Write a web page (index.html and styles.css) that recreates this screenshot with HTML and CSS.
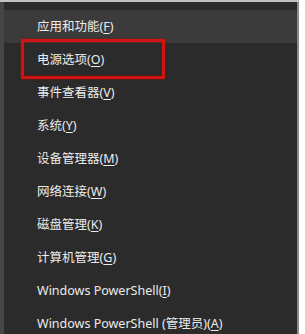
FILE: index.html
```html
<!DOCTYPE html>
<html lang="zh-CN">
<head>
<meta charset="utf-8">
<link rel="stylesheet" href="styles.css">
</head>
<body>
<div class="frame">
  <div class="menu">
    <div class="item hover">应用和功能(<u>F</u>)</div>
    <div class="item">电源选项(<u>O</u>)</div>
    <div class="item">事件查看器(<u>V</u>)</div>
    <div class="item">系统(<u>Y</u>)</div>
    <div class="item">设备管理器(<u>M</u>)</div>
    <div class="item">网络连接(<u>W</u>)</div>
    <div class="item">磁盘管理(<u>K</u>)</div>
    <div class="item">计算机管理(<u>G</u>)</div>
    <div class="item">Windows PowerShell(<u>I</u>)</div>
    <div class="item">Windows PowerShell (管理员)(<u>A</u>)</div>
    <div class="mark"></div>
  </div>
</div>
</body>
</html>
```
FILE: styles.css
```css
html, body {
  margin: 0;
  padding: 0;
  background: #ffffff;
  overflow: hidden;
}
.frame {
  width: 299px;
  height: 334px;
  background: #c2c2c2;
  padding-top: 2px;
  box-sizing: border-box;
}
.menu {
  position: relative;
  height: 100%;
  background: #2b2b2b;
  border-left: 4px solid #464646;
  border-right: 2px solid #8a8a8a;
  padding-top: 8px;
  box-sizing: border-box;
  font-family: "Noto Sans", "Noto Sans CJK SC", sans-serif;
  font-size: 12.5px;
  color: #ececec;
}
.item {
  height: 33px;
  line-height: 34px;
  padding-left: 33px;
  white-space: nowrap;
}
.item u {
  text-decoration-thickness: 1px;
  text-underline-offset: 2px;
}
.hover {
  background: #3b3b3b;
}
.mark {
  position: absolute;
  left: 17px;
  top: 37px;
  width: 144px;
  height: 40px;
  box-sizing: border-box;
  border: 3px solid #d01414;
  box-shadow: 0 0 2px #8a0d0d, inset 0 0 2px #8a0d0d;
}
```
